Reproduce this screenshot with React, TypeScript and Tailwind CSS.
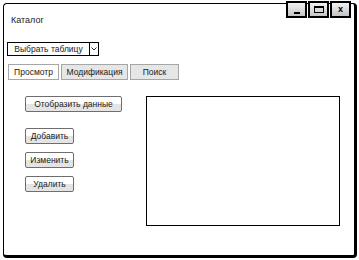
import React from 'react';

const font = { fontFamily: '"Liberation Sans", Arial, sans-serif' };

function WinButton({ children }: { children: React.ReactNode }) {
  return (
    <div className="flex h-[17px] w-[21px] items-center justify-center border-2 border-black bg-gradient-to-b from-[#f2f2f2] to-[#c4c4c4]">
      {children}
    </div>
  );
}

function ActionButton({ label, wide }: { label: string; wide?: boolean }) {
  return (
    <div
      className={`flex h-[16px] items-center justify-center rounded-[2px] border border-[#6e6e6e] bg-gradient-to-b from-white from-50% to-[#e4e4e4] to-50% text-[8.5px] text-[#1a1a1a] ${
        wide ? 'w-[97px]' : 'w-[49px]'
      }`}
    >
      {label}
    </div>
  );
}

export default function App() {
  const tabs = [
    { label: 'Просмотр', w: 'w-[51px]', active: true },
    { label: 'Модификация', w: 'w-[67px]', active: false },
    { label: 'Поиск', w: 'w-[49px]', active: false },
  ];

  return (
    <div className="h-[260px] w-[359px] bg-white pl-[3px] pt-[3px]" style={font}>
      <div className="relative flex h-[255px] w-[354px] flex-col rounded-[4px] border-t border-l border-r-[3px] border-b-[3px] border-black bg-white">
        <div className="absolute -top-[3px] right-[3px] flex gap-[1px]">
          <WinButton>
            <div className="mt-[6px] h-[2px] w-[6px] bg-black" />
          </WinButton>
          <WinButton>
            <div className="h-[7px] w-[10px] border border-t-2 border-black" />
          </WinButton>
          <WinButton>
            <span className="text-[9px] font-bold leading-none text-black">x</span>
          </WinButton>
        </div>

        <div className="ml-[7px] mt-[10px] h-[12px] text-[9px] leading-[12px] text-[#1a1a1a]">Каталог</div>

        <div className="ml-[3px] mt-[16px] flex h-[14px] w-[92px] border border-black text-[8.5px] leading-[12px] text-[#1a1a1a]">
          <div className="flex flex-1 items-center justify-center">Выбрать таблицу</div>
          <div className="flex w-[9px] items-center justify-center border-l border-black">
            <svg width="6" height="4" viewBox="0 0 6 4">
              <path d="M0.5 0.5 L3 3 L5.5 0.5" fill="none" stroke="black" strokeWidth="0.8" />
            </svg>
          </div>
        </div>

        <div className="ml-[4px] mt-[8px] flex gap-[2px]">
          {tabs.map((t) => (
            <div
              key={t.label}
              className={`flex h-[16px] items-center justify-center border border-[#a6a6a6] text-[8.5px] text-[#1a1a1a] ${t.w} ${
                t.active ? 'bg-white' : 'bg-[#e6e6e6]'
              }`}
            >
              {t.label}
            </div>
          ))}
        </div>

        <div className="mt-[16px] flex">
          <div className="ml-[21px] flex flex-col">
            <ActionButton label="Отобразить данные" wide />
            <div className="mt-[16px] flex flex-col gap-[8px]">
              <ActionButton label="Добавить" />
              <ActionButton label="Изменить" />
              <ActionButton label="Удалить" />
            </div>
          </div>
          <div className="ml-auto mr-[14px] h-[130px] w-[194px] border border-black" />
        </div>
      </div>
    </div>
  );
}
